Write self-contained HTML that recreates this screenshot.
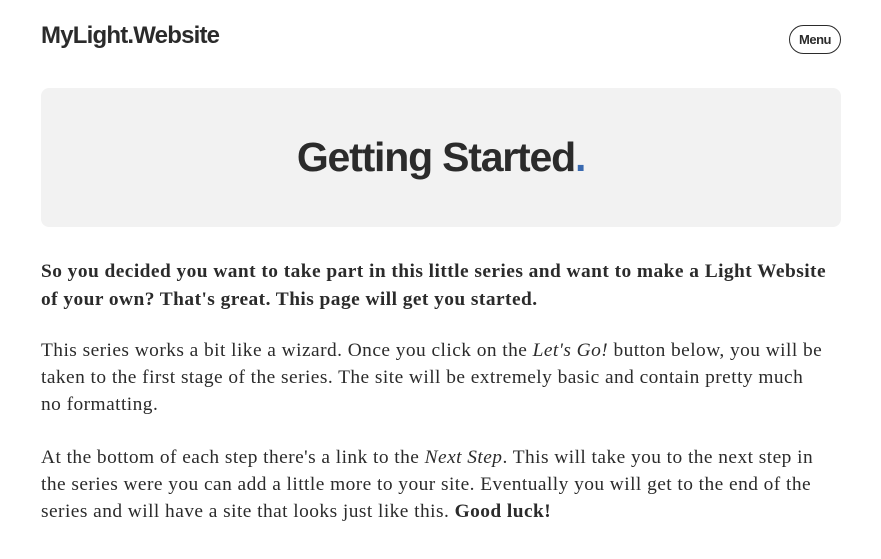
<!DOCTYPE html>
<html><head><meta charset="utf-8"><style>
html,body{margin:0;padding:0;background:#fff;width:881px;height:559px;overflow:hidden;color:#2b2b2b}
.logo{position:absolute;left:41px;top:22px;font:bold 24px "Liberation Sans",sans-serif;letter-spacing:-0.8px;color:#2b2b2b}
.menu{position:absolute;left:789px;top:25px;width:52px;height:29px;border:1.3px solid #2b2b2b;border-radius:15px;box-sizing:border-box;font:bold 13px "Liberation Sans",sans-serif;text-align:center;line-height:27px;letter-spacing:-0.5px}
.hero{position:absolute;left:41px;top:88px;width:800px;height:139px;background:#f2f2f2;border-radius:8px}
.hero h1{margin:0;text-align:center;font:bold 41px/139px "Liberation Sans",sans-serif;letter-spacing:-1.2px;color:#2b2b2b}
.hero h1 span{color:#3a6ab0}
p{position:absolute;left:41px;margin:0;font:19.4px/27px "Liberation Serif",serif;letter-spacing:0.45px;white-space:nowrap;color:#2b2b2b}
</style></head><body>
<div class="logo">MyLight.Website</div>
<div class="menu">Menu</div>
<div class="hero"><h1>Getting Started<span>.</span></h1></div>
<p style="top:258px;font-weight:bold;line-height:28px">So you decided you want to take part in this little series and want to make a Light Website<br>of your own? That's great. This page will get you started.</p>
<p style="top:337px">This series works a bit like a wizard. Once you click on the <i>Let's Go!</i> button below, you will be<br>taken to the first stage of the series. The site will be extremely basic and contain pretty much<br>no formatting.</p>
<p style="top:444px">At the bottom of each step there's a link to the <i>Next Step</i>. This will take you to the next step in<br>the series were you can add a little more to your site. Eventually you will get to the end of the<br>series and will have a site that looks just like this. <b>Good luck!</b></p>
</body></html>
